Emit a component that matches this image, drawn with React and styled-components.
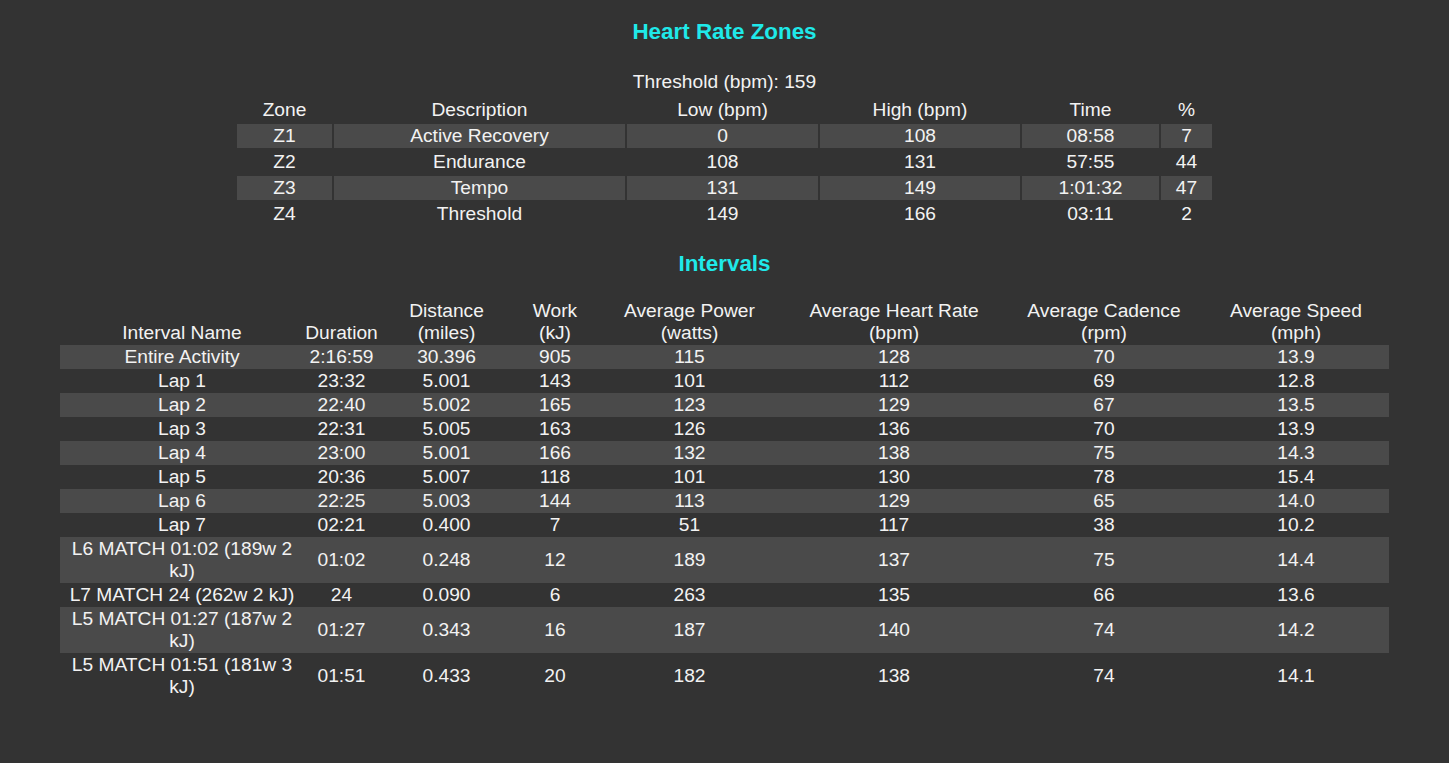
import React from 'react';
import styled, { createGlobalStyle } from 'styled-components';

const zones = [
  ['Z1', 'Active Recovery', '0', '108', '08:58', '7'],
  ['Z2', 'Endurance', '108', '131', '57:55', '44'],
  ['Z3', 'Tempo', '131', '149', '1:01:32', '47'],
  ['Z4', 'Threshold', '149', '166', '03:11', '2'],
];

const zoneCols = [95, 291, 191, 200, 137, 51];

const intervals = [
  ['Entire Activity', '2:16:59', '30.396', '905', '115', '128', '70', '13.9'],
  ['Lap 1', '23:32', '5.001', '143', '101', '112', '69', '12.8'],
  ['Lap 2', '22:40', '5.002', '165', '123', '129', '67', '13.5'],
  ['Lap 3', '22:31', '5.005', '163', '126', '136', '70', '13.9'],
  ['Lap 4', '23:00', '5.001', '166', '132', '138', '75', '14.3'],
  ['Lap 5', '20:36', '5.007', '118', '101', '130', '78', '15.4'],
  ['Lap 6', '22:25', '5.003', '144', '113', '129', '65', '14.0'],
  ['Lap 7', '02:21', '0.400', '7', '51', '117', '38', '10.2'],
  ['L6 MATCH 01:02 (189w 2 kJ)', '01:02', '0.248', '12', '189', '137', '75', '14.4'],
  ['L7 MATCH 24 (262w 2 kJ)', '24', '0.090', '6', '263', '135', '66', '13.6'],
  ['L5 MATCH 01:27 (187w 2 kJ)', '01:27', '0.343', '16', '187', '140', '74', '14.2'],
  ['L5 MATCH 01:51 (181w 3 kJ)', '01:51', '0.433', '20', '182', '138', '74', '14.1'],
];

const intervalHeads = [
  ['Interval Name'],
  ['Duration'],
  ['Distance', '(miles)'],
  ['Work', '(kJ)'],
  ['Average Power', '(watts)'],
  ['Average Heart Rate', '(bpm)'],
  ['Average Cadence', '(rpm)'],
  ['Average Speed', '(mph)'],
];

const intervalCols = [244, 75, 135, 82, 187, 222, 198, 186];

const GlobalStyle = createGlobalStyle`
  html, body {
    margin: 0;
    background: #333333;
  }
  body {
    font-family: "Liberation Sans", Arial, sans-serif;
    color: #f2f2f2;
    font-size: 19.2px;
  }
`;

const Page = styled.div`
  min-height: 763px;
  padding: 19px 0 40px;
  box-sizing: border-box;
  display: flex;
  flex-direction: column;
  align-items: center;
`;

const Heading = styled.h2`
  margin: ${p => p.$top || 0}px 0 0;
  font-size: 22.4px;
  line-height: 26px;
  font-weight: bold;
  color: #1fe9e9;
  text-align: center;
`;

const Threshold = styled.p`
  margin: 26px 0 3px;
  line-height: 22px;
  text-align: center;
`;

const Table = styled.table`
  table-layout: fixed;
  border-collapse: separate;
  border-spacing: ${p => p.$spacing}px;
  width: ${p => p.$width}px;
  margin-top: ${p => p.$top || 0}px;

  th, td {
    padding: 1px;
    line-height: 22px;
    text-align: center;
    font-weight: normal;
  }

  th {
    vertical-align: bottom;
  }

  tbody tr:nth-child(odd) td {
    background: #4a4a4a;
  }
`;

export default function App() {
  return (
    <>
      <GlobalStyle />
      <Page>
        <Heading>Heart Rate Zones</Heading>
        <Threshold>Threshold (bpm): 159</Threshold>
        <Table $spacing={2} $width={979}>
          <colgroup>
            {zoneCols.map((w, i) => <col key={i} style={{ width: w }} />)}
          </colgroup>
          <thead>
            <tr>
              {['Zone', 'Description', 'Low (bpm)', 'High (bpm)', 'Time', '%'].map(h => (
                <th key={h}>{h}</th>
              ))}
            </tr>
          </thead>
          <tbody>
            {zones.map(row => (
              <tr key={row[0]}>
                {row.map((c, i) => <td key={i}>{c}</td>)}
              </tr>
            ))}
          </tbody>
        </Table>

        <Heading $top={23}>Intervals</Heading>
        <Table $spacing={0} $width={1329} $top={22}>
          <colgroup>
            {intervalCols.map((w, i) => <col key={i} style={{ width: w }} />)}
          </colgroup>
          <thead>
            <tr>
              {intervalHeads.map(h => (
                <th key={h[0]}>
                  {h[0]}
                  {h[1] && <br />}
                  {h[1]}
                </th>
              ))}
            </tr>
          </thead>
          <tbody>
            {intervals.map((row, r) => (
              <tr key={r}>
                {row.map((c, i) => <td key={i}>{c}</td>)}
              </tr>
            ))}
          </tbody>
        </Table>
      </Page>
    </>
  );
}
